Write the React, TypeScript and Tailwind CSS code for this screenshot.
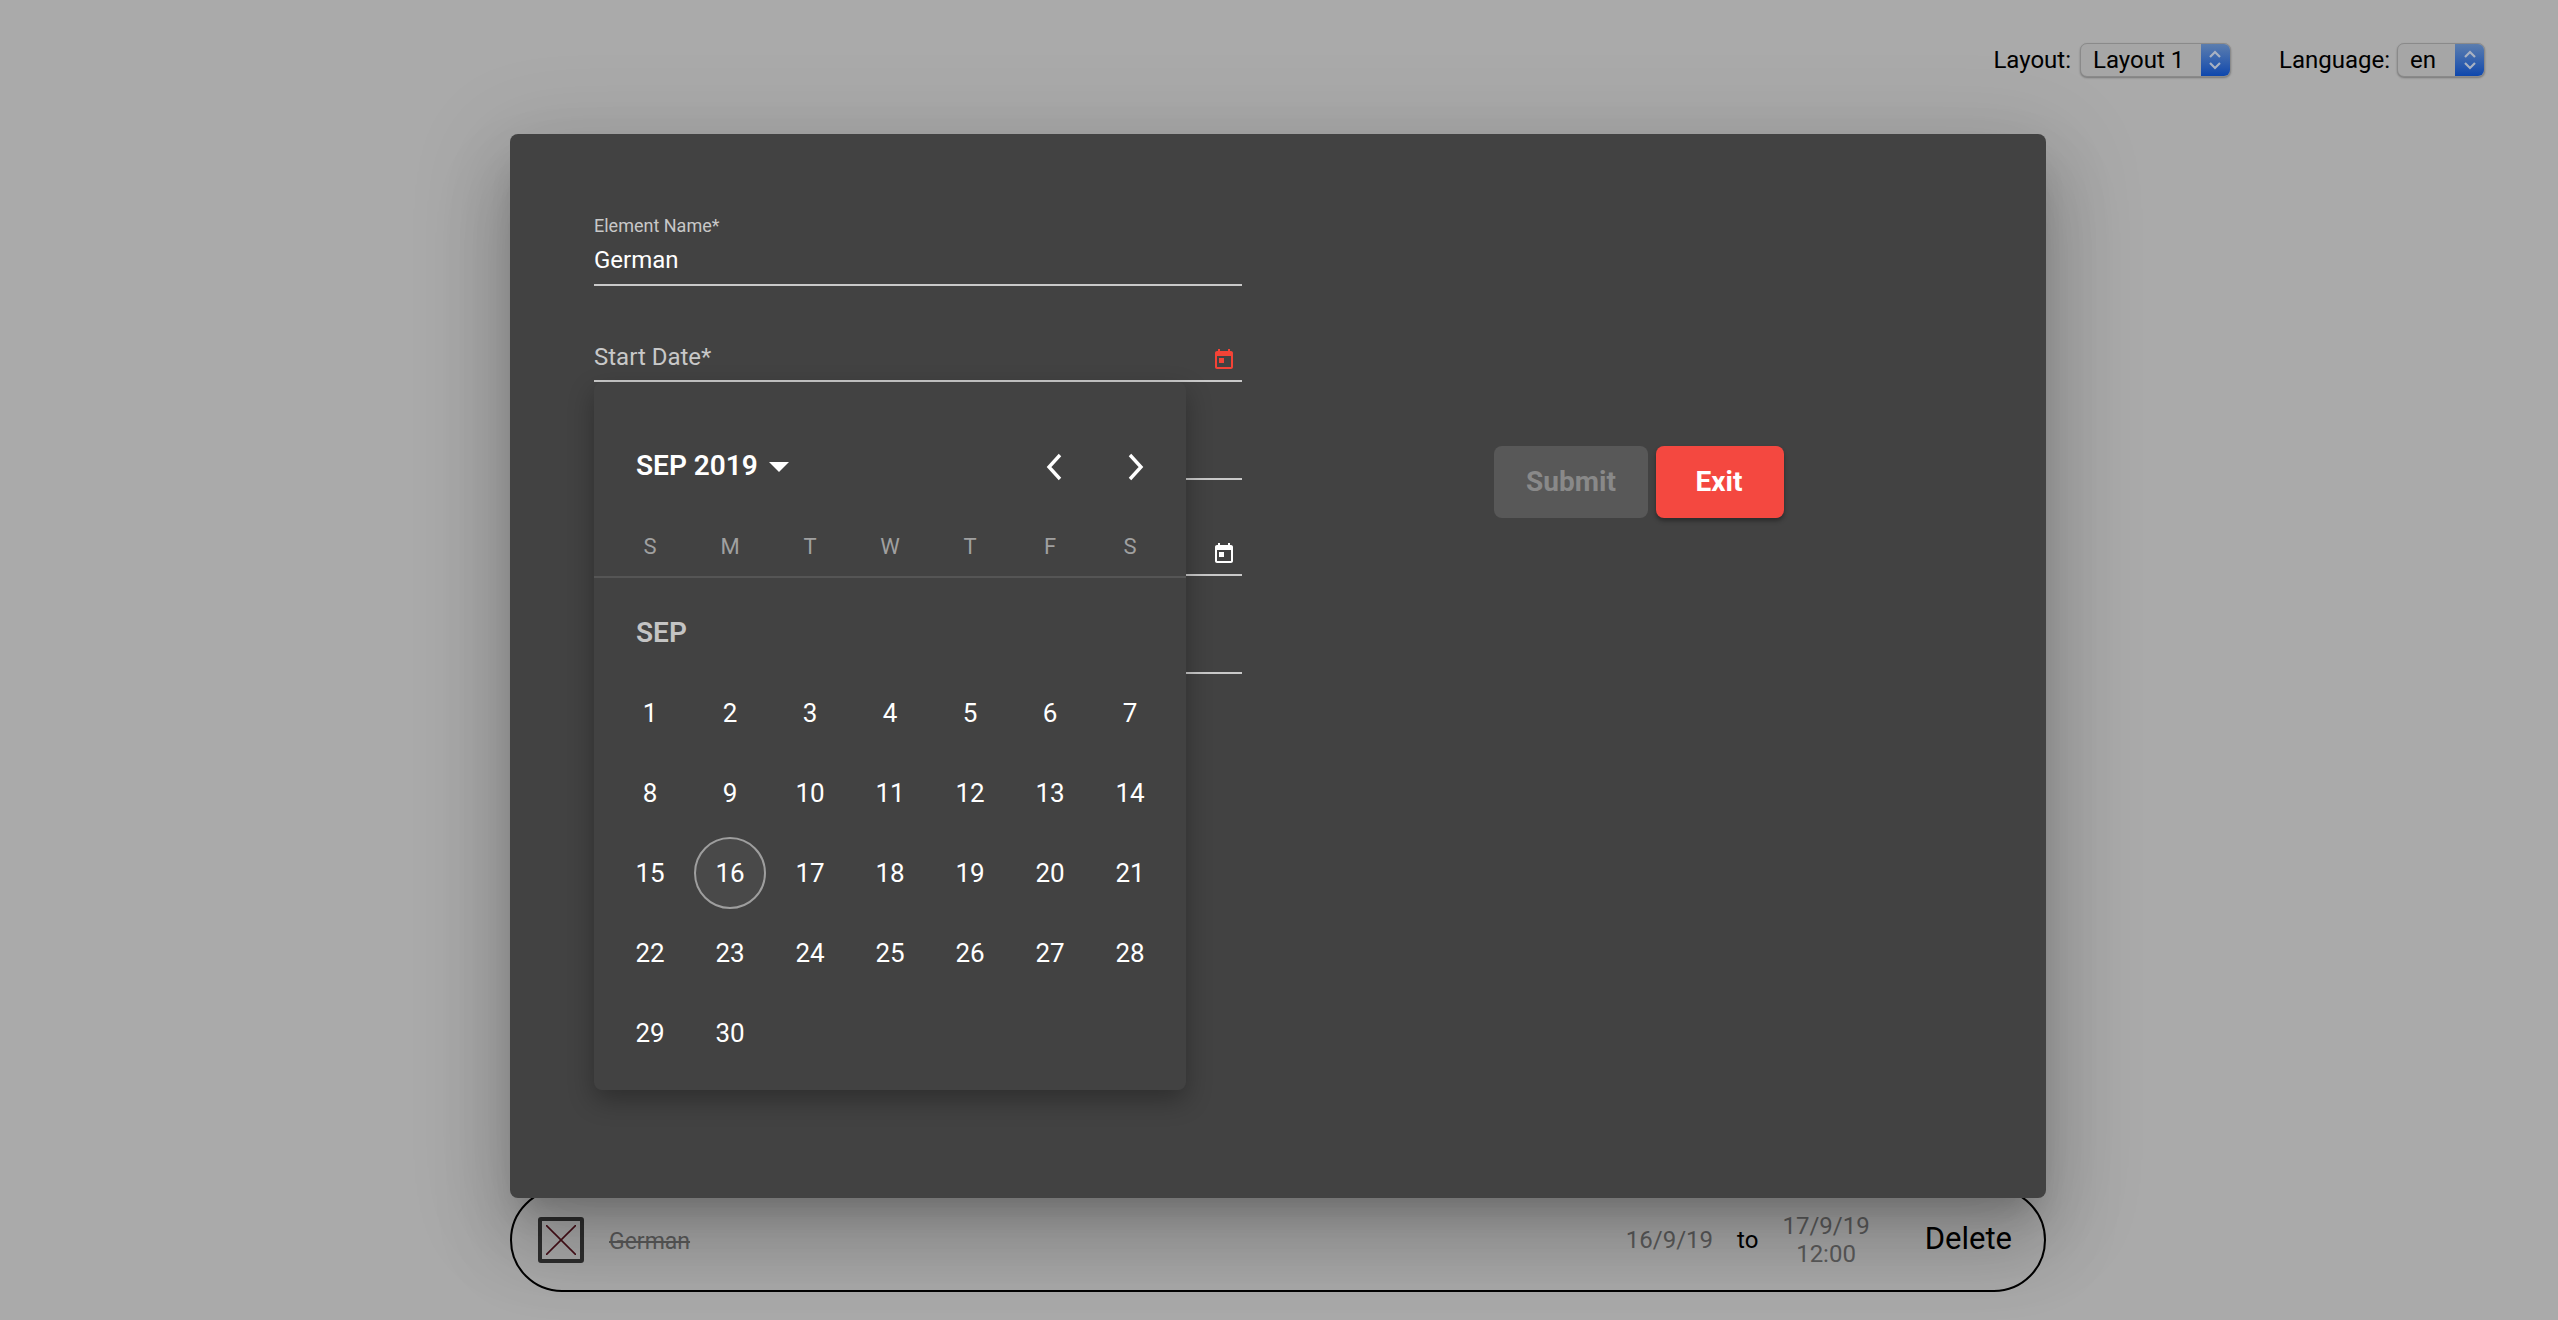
const weekDays = ["S", "M", "T", "W", "T", "F", "S"];
const days = Array.from({ length: 30 }, (_, i) => i + 1);

function TodayIcon({ className }: { className: string }) {
  return (
    <svg viewBox="0 0 24 24" className={className} fill="currentColor">
      <path d="M19 3h-1V1h-2v2H8V1H6v2H5c-1.11 0-1.99.9-1.99 2L3 19c0 1.1.89 2 2 2h14c1.1 0 2-.9 2-2V5c0-1.1-.9-2-2-2zm0 16H5V8h14v11zM7 10h5v5H7z" />
    </svg>
  );
}

function NativeSelect({ label, value, className }: { label: string; value: string; className: string }) {
  return (
    <div className="flex items-center">
      <span className="text-[24px] leading-[34px] text-black">{label}</span>
      <div className={`flex h-[34px] overflow-hidden rounded-[7px] border border-[#8a8a8a] bg-[#a6a6a6] shadow-[0_1px_2px_rgba(0,0,0,0.3)] ${className}`}>
        <span className="flex-1 pl-[12px] text-[24px] leading-[32px] text-black">{value}</span>
        <span className="flex w-[29px] items-center justify-center bg-gradient-to-b from-[#5b7dae] to-[#0d47ad]">
          <svg viewBox="0 0 16 24" className="h-[24px] w-[16px]" fill="none" stroke="#a9b2c2" strokeWidth="2.2">
            <polyline points="3,9 8,4 13,9" />
            <polyline points="3,15 8,20 13,15" />
          </svg>
        </span>
      </div>
    </div>
  );
}

function Field({ label, value, icon, small, className }: { label?: string; value?: string; icon?: string; small?: string; className?: string }) {
  return (
    <div className={`relative flex h-[64px] flex-col justify-end border-b-2 border-[#c9c9c9] pb-[8px] ${className ?? ""}`}>
      {small && <span className="absolute left-0 top-[-8px] text-[18px] leading-[24px] text-[#c8c8c8]">{small}</span>}
      {value && <span className="text-[24px] leading-[32px] text-white">{value}</span>}
      {label && <span className="translate-y-[1px] text-[24px] leading-[32px] text-[#c8c8c8]">{label}</span>}
      {icon && <TodayIcon className={`absolute bottom-[8px] right-[6px] h-[24px] w-[24px] ${icon}`} />}
    </div>
  );
}

function DatePicker() {
  return (
    <div className="absolute left-0 top-[160px] h-[708px] w-[592px] rounded-[8px] bg-[#424242] px-[16px] pt-[44px] shadow-[0_10px_26px_rgba(0,0,0,0.3)]">
      <div className="flex h-[80px] items-center">
        <span className="ml-[26px] text-[28px] font-semibold text-white">SEP 2019</span>
        <span className="ml-[11px] mt-[2px] h-0 w-0 border-x-[10px] border-t-[10px] border-x-transparent border-t-white" />
        <svg viewBox="0 0 18 28" className="ml-auto mt-[2px] h-[28px] w-[18px]" fill="none" stroke="white" strokeWidth="3.4">
          <polyline points="15,2 4,14 15,26" />
        </svg>
        <svg viewBox="0 0 18 28" className="ml-[64px] mr-[25px] mt-[2px] h-[28px] w-[18px]" fill="none" stroke="white" strokeWidth="3.4">
          <polyline points="3,2 14,14 3,26" />
        </svg>
      </div>
      <div className="-mx-[16px] mt-[10px] border-b-2 border-[#555555] px-[16px]">
        <div className="grid h-[60px] grid-cols-7">
          {weekDays.map((d, i) => (
            <span key={i} className="text-center text-[22px] leading-[62px] text-[#a0a0a0]">{d}</span>
          ))}
        </div>
      </div>
      <div className="ml-[26px] h-[95px] pt-[37px] text-[28px] font-semibold leading-[36px] text-[#c4c4c4]">SEP</div>
      <div className="grid grid-cols-7">
        {days.map((d) => (
          <div key={d} className="flex h-[80px] items-center justify-center">
            <span className={d === 16 ? "flex h-[72px] w-[72px] items-center justify-center rounded-full border-2 border-[#9e9e9e] bg-white/[0.04] text-[26px] text-white" : "text-[26px] text-white"}>
              {d}
            </span>
          </div>
        ))}
      </div>
    </div>
  );
}

export default function App() {
  return (
    <div className="relative h-[1320px] overflow-hidden bg-[#aaaaaa] font-['Roboto',sans-serif]">
      <header className="flex h-[120px] items-start justify-end gap-[48px] pr-[73px] pt-[43px]">
        <NativeSelect label="Layout:" value="Layout 1" className="ml-[9px] w-[151px]" />
        <NativeSelect label="Language:" value="en" className="ml-[7px] w-[88px]" />
      </header>
      <div className="ml-[510px] mr-[512px] mt-[1068px] flex h-[104px] items-center rounded-[52px] border-2 border-black pl-[26px] pr-[32px]">
        <span className="flex h-[46px] w-[46px] items-center justify-center rounded-[3px] border-[4px] border-[#2e2e2e]">
          <svg viewBox="0 0 30 30" className="h-[30px] w-[30px]" stroke="#470f18" strokeWidth="1.6">
            <line x1="0" y1="0" x2="30" y2="30" />
            <line x1="30" y1="0" x2="0" y2="30" />
          </svg>
        </span>
        <span className="ml-[25px] mt-[5px] text-[23px] text-[#5c5c5c] line-through">German</span>
        <span className="ml-auto text-[24px] text-[#5c5c5c]">16/9/19</span>
        <span className="ml-[24px] text-[24px] text-black">to</span>
        <span className="ml-[24px] text-center text-[24px] leading-[28px] text-[#5c5c5c]">17/9/19<br />12:00</span>
        <span className="mb-[2px] ml-[55px] text-[31px] text-black">Delete</span>
      </div>
      <div className="absolute left-[510px] top-[134px] flex h-[1064px] w-[1536px] rounded-[8px] bg-[#424242] pl-[84px] pt-[88px] shadow-[0_22px_30px_-14px_rgba(0,0,0,0.2),0_48px_76px_6px_rgba(0,0,0,0.14),0_18px_92px_16px_rgba(0,0,0,0.12)]">
        <div className="relative h-fit w-[648px]">
          <Field small="Element Name*" value="German" />
          <Field label="Start Date*" icon="text-[#f44336]" className="mt-[32px]" />
          <Field className="mt-[34px]" />
          <Field icon="text-white" className="mt-[32px]" />
          <Field className="mt-[34px]" />
          <DatePicker />
        </div>
        <div className="ml-[252px] mt-[224px] flex h-[72px] gap-[8px]">
          <button className="w-[154px] rounded-[8px] bg-[#585858] text-[28px] font-bold text-[#898989]">Submit</button>
          <button className="w-[128px] rounded-[8px] bg-[#f44840] pr-[2px] text-[28px] font-bold text-white shadow-[0_3px_4px_rgba(0,0,0,0.35)]">Exit</button>
        </div>
      </div>
    </div>
  );
}
